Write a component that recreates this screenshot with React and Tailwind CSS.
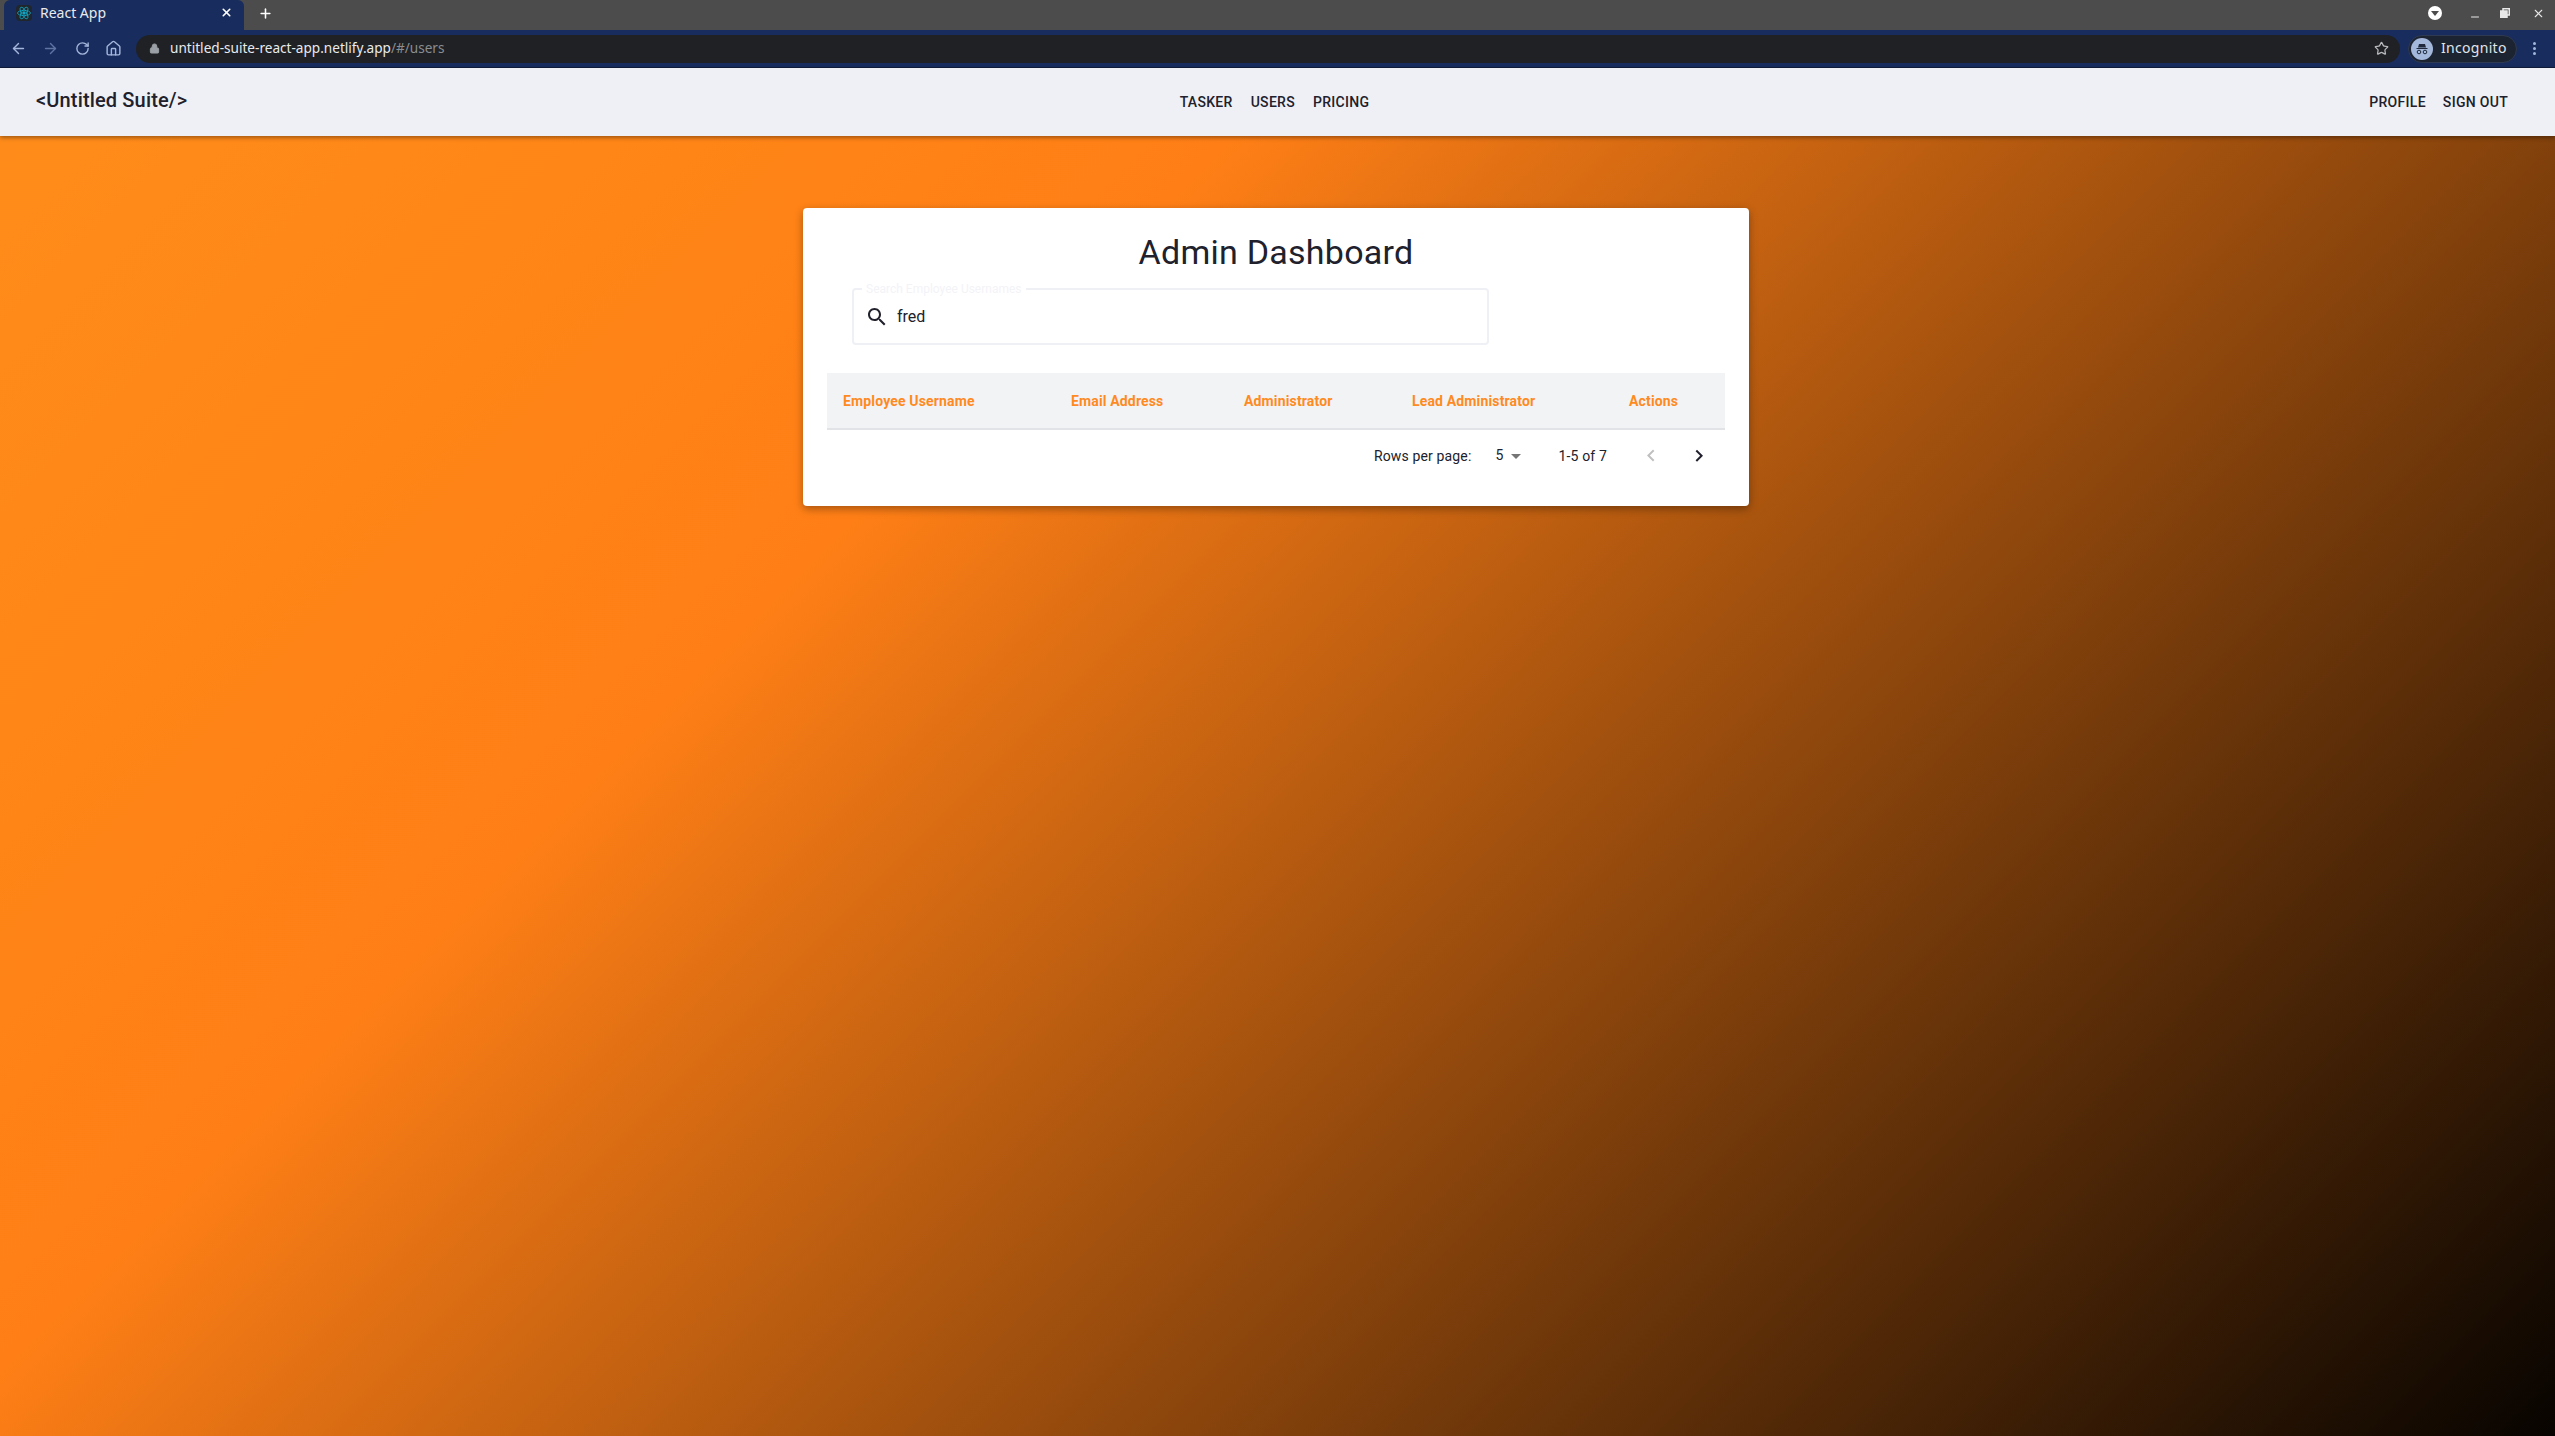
import { Plus, X, ArrowLeft, ArrowRight, RotateCw, Home, Lock, Star, Minus } from 'lucide-react';

const MuiIcon = ({ d, className }) => (
  <svg viewBox="0 0 24 24" fill="currentColor" className={className}>
    <path d={d} />
  </svg>
);

const ReactLogo = () => (
  <svg viewBox="0 0 16 16" className="w-4 h-4 bg-[#20262c] rounded-sm" fill="none" stroke="#12a7c4" strokeWidth="0.8">
    <ellipse cx="8" cy="8" rx="6.5" ry="2.6" />
    <ellipse cx="8" cy="8" rx="6.5" ry="2.6" transform="rotate(60 8 8)" />
    <ellipse cx="8" cy="8" rx="6.5" ry="2.6" transform="rotate(120 8 8)" />
    <circle cx="8" cy="8" r="1.3" fill="#12a7c4" />
  </svg>
);

const BrowserChrome = () => (
  <div className="font-['Noto_Sans',sans-serif]">
    {/* Tab strip */}
    <div className="h-[30px] bg-[#4c4c4c] flex items-end">
      <div className="w-[240px] h-[30px] ml-[4px] bg-[#182c5d] rounded-t-md flex items-center pl-[12px] pr-[11px] pb-[5px] gap-[8px]">
        <ReactLogo />
        <span className="text-[14px] text-[#e8eaed] flex-1">React App</span>
        <X size={13} strokeWidth={3} className="text-white" />
      </div>
      <div className="h-[30px] flex items-center ml-[14px] pb-[4px]">
        <Plus size={15} strokeWidth={2.5} className="text-white" />
      </div>
      <div className="ml-auto h-[30px] flex items-center pr-[10px] pb-[4px]">
        <div className="w-[14px] h-[14px] rounded-full bg-white flex items-center justify-center mr-[27px]">
          <div className="w-0 h-0 border-l-[4px] border-r-[4px] border-t-[5px] border-l-transparent border-r-transparent border-t-[#4c4c4c]" />
        </div>
        <Minus size={12} strokeWidth={2} className="text-[#e8e8e8] mr-[19px] mt-[7px]" />
        <svg viewBox="0 0 10 10" className="w-[10px] h-[10px] mr-[22px]" fill="none" stroke="#e8e8e8" strokeWidth="1.5">
          <rect x="3" y="0.75" width="6.25" height="6.25" />
          <rect x="0.75" y="3" width="6.25" height="6.25" fill="#e8e8e8" />
        </svg>
        <X size={13} strokeWidth={2} className="text-[#e8e8e8]" />
      </div>
    </div>
    {/* Toolbar */}
    <div className="h-[38px] bg-[#182c5d] border-b border-[#0f1c3a] flex items-center pl-[10px] pr-[19px]">
      <ArrowLeft size={17} strokeWidth={2} className="text-[#a4b6dc]" />
      <ArrowRight size={17} strokeWidth={2} className="text-[#5f74a3] ml-[15px]" />
      <RotateCw size={15} strokeWidth={2.2} className="text-[#a4b6dc] ml-[16px]" />
      <Home size={17} strokeWidth={2} className="text-[#a4b6dc] ml-[15px]" />
      <div className="h-[28px] flex-1 ml-[14px] bg-[#202124] rounded-full flex items-center pl-[13px] pr-[11px]">
        <Lock size={11} fill="#9aa0a6" className="text-[#9aa0a6]" />
        <span className="text-[13.6px] ml-[10px] leading-[18px] mb-[1px] text-[#e8eaed]">untitled-suite-react-app.netlify.app</span>
        <span className="text-[13.6px] leading-[18px] mb-[1px] text-[#8a8d91]">/#/users</span>
        <Star size={15} className="text-[#b8babe] ml-auto" />
      </div>
      <div className="h-[28px] w-[109px] ml-[8px] bg-[#1c2431] border border-[#2e3a52] rounded-full flex items-center pl-[2px]">
        <div className="w-[22px] h-[22px] rounded-full bg-[#a4b8dc] flex items-center justify-center">
          <svg viewBox="0 0 16 16" className="w-[16px] h-[16px]" fill="#202a3c">
            <path d="M5 3h6l1 3.5H4zM2.5 7h11v1h-11z" />
            <circle cx="5" cy="11" r="1.8" fill="none" stroke="#202a3c" />
            <circle cx="11" cy="11" r="1.8" fill="none" stroke="#202a3c" />
          </svg>
        </div>
        <span className="text-[14px] leading-[18px] mb-[1px] text-[#e0e4ea] ml-[8px] tracking-[0.3px]">Incognito</span>
      </div>
      <div className="flex flex-col gap-[2px] ml-[16px]">
        <div className="w-[3px] h-[3px] rounded-full bg-[#a4b6dc]" />
        <div className="w-[3px] h-[3px] rounded-full bg-[#a4b6dc]" />
        <div className="w-[3px] h-[3px] rounded-full bg-[#a4b6dc]" />
      </div>
    </div>
  </div>
);

const NavBar = () => (
  <header className="h-[68px] bg-[#eff0f5] shadow-[0_2px_4px_rgba(0,0,0,0.35)] relative flex items-center justify-between pl-[36px] pr-[47px] font-['Roboto',sans-serif] text-[#20212c]">
    <div className="text-[20px] font-medium tracking-[0.15px] mb-[5px] w-[405px]">&lt;Untitled Suite/&gt;</div>
    <nav className="flex gap-[18px] text-[14px] font-medium uppercase tracking-[0.3px]">
      <span>Tasker</span>
      <span>Users</span>
      <span>Pricing</span>
    </nav>
    <nav className="flex gap-[17px] text-[14px] font-medium uppercase tracking-[0.3px] w-[400px] justify-end">
      <span>Profile</span>
      <span>Sign Out</span>
    </nav>
  </header>
);

const columns = [
  { label: 'Employee Username', width: 'w-[228px]' },
  { label: 'Email Address', width: 'w-[173px]' },
  { label: 'Administrator', width: 'w-[168px]' },
  { label: 'Lead Administrator', width: 'w-[217px]' },
  { label: 'Actions', width: 'w-[96px]' },
];

const UsersTable = () => (
  <div className="mt-[28px] mx-[24px]">
    <div className="flex items-center h-[57px] bg-[#f2f3f5] border-b-2 border-[#e2e3e6] pl-[16px] pt-[1px] text-[14px] font-bold tracking-[0.15px] text-[#ff8a1f]">
      {columns.map((col) => (
        <div key={col.label} className={`${col.width} shrink-0`}>
          {col.label}
        </div>
      ))}
    </div>
    <div className="h-[52px] flex items-center justify-end text-[14px] tracking-[0.15px] text-[#20212c]">
      <span>Rows per page:</span>
      <span className="ml-[24px] mb-[2px]">5</span>
      <MuiIcon d="M7 10l5 5 5-5z" className="w-[24px] h-[24px] text-[#757575]" />
      <span className="ml-[31px]">1-5 of 7</span>
      <MuiIcon d="M15.41 16.09l-4.58-4.59 4.58-4.59L14 5.5l-6 6 6 6z" className="w-[24px] h-[24px] text-[#c0c0c0] ml-[32px]" />
      <MuiIcon d="M8.59 16.34l4.58-4.59-4.58-4.59L10 5.75l6 6-6 6z" className="w-[24px] h-[24px] text-[#20212c] ml-[24px] mr-[14px]" />
    </div>
  </div>
);

const App = () => {
  return (
    <div className="w-[2555px] h-[1436px] overflow-hidden flex flex-col">
      <BrowserChrome />
      <NavBar />
      <main className="flex-1 bg-[linear-gradient(135deg,#ff8c1a_0%,#ff8617_16%,#ff7f16_32%,#000000_102%)] flex justify-center items-start pt-[72px] pr-[3px] font-['Roboto',sans-serif]">
        <div className="w-[946px] h-[298px] bg-white rounded-[4px] shadow-[0_3px_8px_rgba(0,0,0,0.35)]">
          <h1 className="text-[34px] tracking-[0.25px] text-center text-[#20212c] pt-[24px] leading-[40px]">Admin Dashboard</h1>
          <fieldset className="ml-[49px] mt-[12px] w-[637px] h-[61px] border-2 border-[#eff0f5] rounded-[4px] pl-[12px] flex items-center">
            <legend className="text-[12px] text-[#f3f3f7] px-[4px] ml-[-4px] leading-[10px]">Search Employee Usernames</legend>
            <div className="flex items-center mb-[3px] ml-[-1px]">
              <MuiIcon d="M15.5 14h-.79l-.28-.27C15.41 12.59 16 11.11 16 9.5 16 5.91 13.09 3 9.5 3S3 5.91 3 9.5 5.91 16 9.5 16c1.61 0 3.09-.59 4.23-1.57l.27.28v.79l5 4.99L20.49 19l-4.99-5zm-6 0C7.01 14 5 11.99 5 9.5S7.01 5 9.5 5 14 7.01 14 9.5 11.99 14 9.5 14z" className="w-[24px] h-[24px] text-[#20212c]" />
              <span className="ml-[8px] text-[16px] text-[#20212c]">fred</span>
            </div>
          </fieldset>
          <UsersTable />
        </div>
      </main>
    </div>
  );
};

export default App;
